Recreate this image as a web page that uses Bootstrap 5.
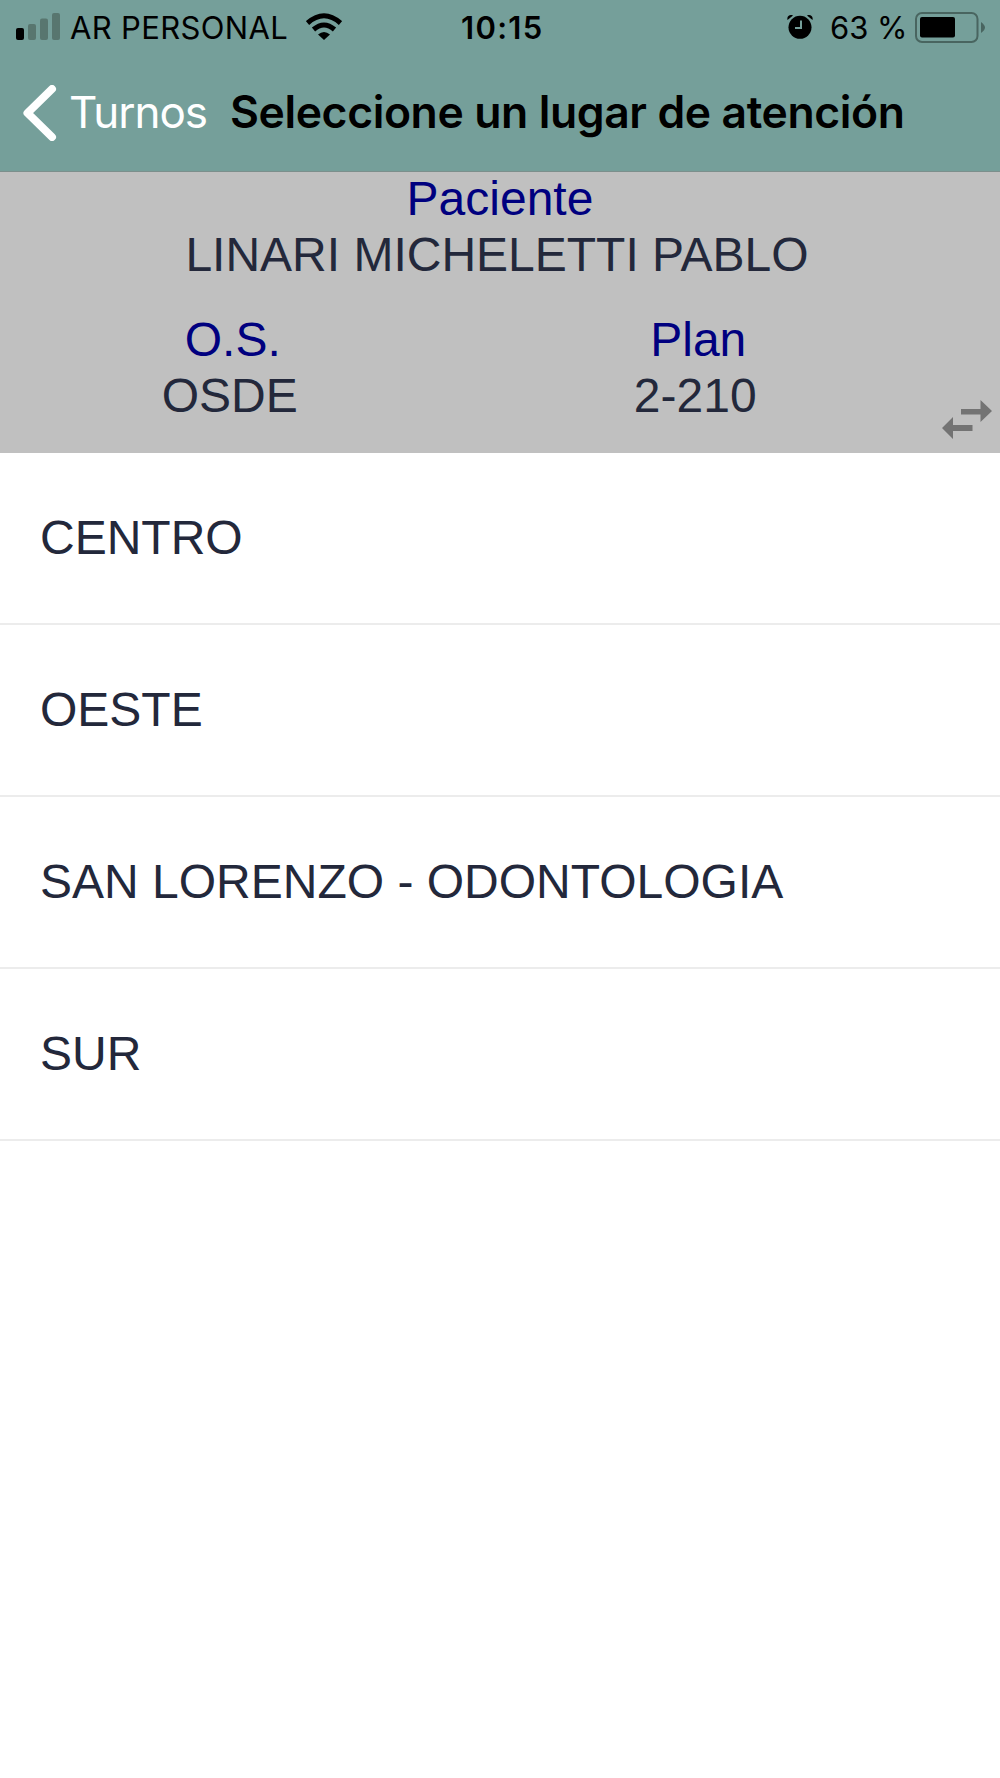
<!DOCTYPE html>
<html lang="es">
<head>
<meta charset="utf-8">
<meta name="viewport" content="width=device-width, initial-scale=1">
<title>Seleccione un lugar de atención</title>
<link href="https://cdn.jsdelivr.net/npm/bootstrap@5.3.0/dist/css/bootstrap.min.css" rel="stylesheet">
<style>
  body { background: #fff; color: #23283b; font-family: "Liberation Sans", Arial, sans-serif; font-size: 48px; line-height: 52px; overflow-x: hidden; }
  svg { display: block; flex: none; }
  .app-top { height: 172px; background: #759f9a; border-bottom: 1px solid #7c8f8c; font-family: Inter, "Liberation Sans", sans-serif; color: #000; }
  .status-bar { height: 54px; padding-left: 16px; font-size: 31px; line-height: 54px; }
  .status-side { flex: 1 1 0; }
  .status-bar span { padding-top: 1px; }
  .carrier { margin-left: 10px; width: 218px; letter-spacing: .35px; }
  .wifi { margin-left: 18px; }
  .clock { width: 84px; margin-right: 10px; font-weight: 600; letter-spacing: 1.3px; }
  .percent { margin-left: 17px; width: 77px; }
  .battery { margin: 0 14px 0 7px; }
  .title-bar { height: 117px; padding-left: 23px; }
  .back-link { color: #fff; font-size: 44px; width: 207px; letter-spacing: -1px; }
  .back-link span { margin-left: 11px; padding-bottom: 1px; }
  .page-title { font-size: 44.5px; font-weight: 600; letter-spacing: -.4px; line-height: 117px; margin: 0; }
  .patient { height: 281px; padding-top: 1px; background: #c0c0c0; }
  .patient dt { color: #00007f; font-weight: 400; line-height: 52px; }
  .patient dd { margin: 4px 0 0; padding-right: 6px; line-height: 52px; }
  .coverage { margin-top: 33px; padding-right: 69px; }
  .swap { right: 8px; bottom: 13px; }
  .places .list-group-item { height: 172px; padding: 0 40px; border-width: 0 0 2px; border-color: #ececec; color: inherit; background: #fff; }
  .places .list-group-item:last-child { border-bottom-width: 2px; }
</style>
</head>
<body>
<header class="app-top">
  <div class="status-bar d-flex text-nowrap">
    <div class="status-side d-flex align-items-center">
      <svg width="44" height="54" viewBox="0 0 44 54"><rect y="28" width="8" height="12" rx="2"/><g fill="#58766f"><rect x="12" y="24" width="8" height="16" rx="2"/><rect x="24" y="18.500" width="8" height="21.500" rx="2"/><rect x="36" y="13" width="8" height="27" rx="2"/></g></svg>
      <span class="carrier">AR PERSONAL</span>
      <svg class="wifi" width="36" height="54" viewBox="0 0 36 54"><g fill="none" stroke="#000" stroke-width="5"><path d="M1.500 23Q18 8.500 34.500 23"/><path d="M7.500 29.500Q18 20.500 28.500 29.500"/></g><path d="M12 34.500Q18 29.500 24 34.500L18 40Z"/></svg>
    </div>
    <span class="clock">10:15</span>
    <div class="status-side d-flex align-items-center justify-content-end">
      <svg width="26" height="54" viewBox="0 0 26 54"><circle cx="13" cy="27.300" r="11.500"/><path d="M.5 20C-.5 16 3 14 6 15.500ZM25.500 20C26.500 16 23 14 20 15.500Z"/><path d="M14 20.500V28H8" fill="none" stroke="#759f9a" stroke-width="2"/></svg>
      <span class="percent">63 %</span>
      <svg class="battery" width="72" height="54" viewBox="0 0 72 54"><rect x="2" y="13" width="61.500" height="29" rx="6" fill="none" stroke="#496560" stroke-width="2"/><rect x="6" y="17" width="35" height="20.500" rx="2"/><path d="M67 22Q71 25 71 27.500T67 33Z" fill="#496560"/></svg>
    </div>
  </div>
  <nav class="title-bar d-flex align-items-center text-nowrap" aria-label="Navegación">
    <a class="back-link d-flex align-items-center text-decoration-none flex-shrink-0" href="#"><svg width="35" height="56" viewBox="0 0 35 56"><path d="M29 4L4.500 28L29 52" fill="none" stroke="#fff" stroke-width="8" stroke-linecap="round" stroke-linejoin="round"/></svg><span>Turnos</span></a>
    <h1 class="page-title">Seleccione un lugar de atención</h1>
  </nav>
</header>
<main>
  <section class="patient position-relative text-center">
    <dl class="m-0"><dt>Paciente</dt><dd>LINARI MICHELETTI PABLO</dd></dl>
    <div class="coverage row g-0">
      <dl class="col m-0"><dt>O.S.</dt><dd>OSDE</dd></dl>
      <dl class="col m-0"><dt>Plan</dt><dd>2-210</dd></dl>
    </div>
    <svg class="swap position-absolute" width="50" height="40" viewBox="0 0 50 40" fill="#737373"><path d="M19 9H38.500V0L50 11L38.500 22V14.500H19ZM30.500 25H11V17L0 28L11 39V31H30.500Z"/></svg>
  </section>
  <div class="places list-group list-group-flush">
    <a href="#" class="list-group-item d-flex align-items-center">CENTRO</a>
    <a href="#" class="list-group-item d-flex align-items-center">OESTE</a>
    <a href="#" class="list-group-item d-flex align-items-center">SAN LORENZO - ODONTOLOGIA</a>
    <a href="#" class="list-group-item d-flex align-items-center">SUR</a>
  </div>
</main>
<script src="https://cdn.jsdelivr.net/npm/bootstrap@5.3.0/dist/js/bootstrap.bundle.min.js"></script>
</body>
</html>
